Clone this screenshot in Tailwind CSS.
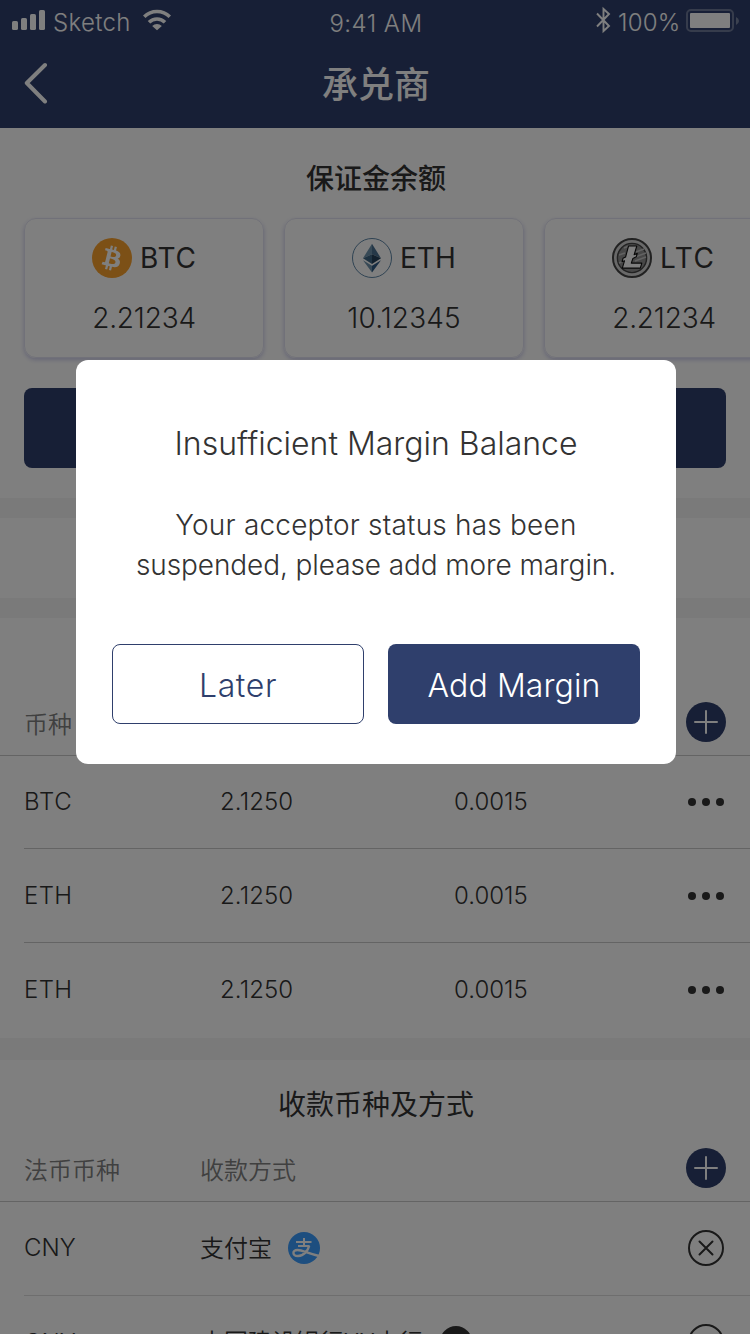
<!DOCTYPE html>
<html lang="zh-CN">
<head>
<meta charset="utf-8">
<title>承兑商</title>
<script src="https://cdn.jsdelivr.net/npm/@tailwindcss/browser@4"></script>
</head>
<body class="font-['Inter','Noto_Sans_CJK_SC',sans-serif] text-[#333]">
<div class="relative w-[750px] h-[1334px] overflow-hidden bg-white">
  <header class="h-32 bg-[#2f3f6c] text-white">
    <div class="h-10 grid grid-cols-3 pl-3 text-2xl leading-10">
      <div class="flex">
        <svg class="w-[33px] h-10 mr-2" viewBox="0 0 33 40" fill="#fff"><rect y="21" width="6" height="9" rx="1.6"/><rect x="9" y="18" width="6" height="12" rx="1.6"/><rect x="18" y="14" width="6" height="16" rx="1.6"/><rect x="27" y="10" width="6" height="20" rx="1.6"/></svg>
        <span class="pt-[3px] w-[78px] font-[350] tracking-[0.35px] whitespace-nowrap">Sketch</span>
        <svg class="w-[28px] h-10 ml-3" viewBox="0 0 28 40" fill="none" stroke="#fff" stroke-width="3.6"><path d="M1.200 16.800a18.200 18.200 0 0 1 25.600 0"/><path d="M6 22.300a11.400 11.400 0 0 1 16 0"/><path d="M9.200 25.900a6.800 6.800 0 0 1 9.600 0L14 30.300z" fill="#fff" stroke="none"/></svg>
      </div>
      <div class="pt-1 text-center font-[350] tracking-[0.45px]"><span class="pr-[10px]">9:41 AM</span></div>
      <div class="flex justify-end pr-[11px]">
        <svg class="w-[15px] h-10 mr-[7px]" viewBox="0 0 15 40" fill="none" stroke="#fff" stroke-width="1.900"><path d="M1 13.500 13 26l-5.500 5V9l5.500 5L1 26.500"/></svg>
        <span class="pt-[3px] w-[62px] font-[350] tracking-[0.2px] whitespace-nowrap">100%</span>
        <svg class="w-[53px] h-10 ml-[6px]" viewBox="0 0 53 40"><rect x="1" y="10" width="46" height="21" rx="4" fill="none" stroke="#fff" stroke-opacity=".3" stroke-width="2"/><rect x="4" y="13" width="40" height="15" rx="1" fill="#fff"/><path d="M50 17q3 1.500 3 4t-3 4z" fill="#fff" fill-opacity=".35"/></svg>
      </div>
    </div>
    <div class="h-[88px] grid grid-cols-[72px_1fr_72px] items-center">
      <svg class="w-[24px] h-[44px] ml-6" viewBox="0 0 24 44" fill="none" stroke="#fff" stroke-width="4" stroke-linecap="round" stroke-linejoin="round"><path d="M21 3 2.800 21 21 39.500"/></svg>
      <h1 class="pl-[2px] pt-[2px] text-center text-4xl leading-[86px] font-medium">承兑商</h1>
    </div>
  </header>

  <section class="h-[370px] pt-[31px]">
    <h2 class="text-center text-[28px] leading-10 h-[59px] font-medium pl-[2px]">保证金余额</h2>
    <div class="flex gap-5 pl-6">
      <div class="shrink-0 w-60 h-[140px] rounded-xl border border-[#e3e3f2] pt-[19px] shadow-[0_2px_4px_rgba(90,90,190,0.3)]">
        <div class="flex items-center justify-center gap-2 h-10 text-[28px]">
          <svg class="w-10 h-10" viewBox="0 0 32 32"><circle cx="16" cy="16" r="16" fill="#f9a12d"/><path transform="translate(-.5 0)" fill="#fff" d="M23.189 14.02c.314-2.096-1.283-3.223-3.465-3.975l.708-2.84-1.728-.43-.69 2.765c-.454-.114-.92-.22-1.385-.326l.695-2.783L15.596 6l-.708 2.839c-.376-.086-.746-.17-1.104-.26l.002-.009-2.384-.595-.46 1.846s1.283.294 1.256.312c.7.175.826.638.805 1.006l-.806 3.235c.048.012.11.03.18.057l-.183-.045-1.13 4.532c-.086.212-.303.531-.793.41.018.025-1.256-.313-1.256-.313l-.858 1.978 2.25.561c.418.105.828.215 1.231.318l-.715 2.872 1.727.43.708-2.84c.472.127.93.245 1.378.357l-.706 2.828 1.728.43.715-2.866c2.948.558 5.164.333 6.097-2.333.752-2.146-.037-3.385-1.588-4.192 1.13-.26 1.98-1.003 2.207-2.538zm-3.95 5.538c-.533 2.147-4.148.986-5.32.695l.95-3.805c1.172.293 4.929.872 4.37 3.11zm.535-5.569c-.487 1.953-3.495.96-4.47.717l.86-3.45c.975.243 4.118.696 3.61 2.733z"/></svg>
          <span class="w-14 font-normal tracking-[0.8px] whitespace-nowrap">BTC</span>
        </div>
        <div class="pt-5 text-center text-[28px] leading-10 font-[350] tracking-[-0.2px]">2.21234</div>
      </div>
      <div class="shrink-0 w-60 h-[140px] rounded-xl border border-[#e3e3f2] pt-[19px] shadow-[0_2px_4px_rgba(90,90,190,0.3)]">
        <div class="flex items-center justify-center gap-2 h-10 text-[28px]">
          <svg class="w-10 h-10" viewBox="0 0 40 40"><circle cx="20" cy="20" r="19.500" fill="none" stroke="#5e86a6"/><path fill="#6f93ac" d="M20 5.700 11 20.300l9-4z"/><path fill="#4b7191" d="M20 5.700v10.600l9 4z"/><path fill="#3f6685" d="m11 20.300 9-4v9.700z"/><path fill="#24415a" d="m29 20.300-9-4v9.700z"/><path fill="#6f93ac" d="m11 22.300 9 5.400v6.800z"/><path fill="#2f5a85" d="m29 22.300-9 5.400v6.800z"/></svg>
          <span class="w-14 font-normal whitespace-nowrap">ETH</span>
        </div>
        <div class="pt-5 text-center text-[28px] leading-10 font-[350] tracking-[0.1px]">10.12345</div>
      </div>
      <div class="shrink-0 w-60 h-[140px] rounded-xl border border-[#e3e3f2] pt-[19px] shadow-[0_2px_4px_rgba(90,90,190,0.3)]">
        <div class="flex items-center justify-center gap-2 h-10 text-[28px]">
          <svg class="w-10 h-10" viewBox="0 0 40 40"><circle cx="20" cy="20" r="19" fill="#d2d2d2" stroke="#444" stroke-width="2"/><circle cx="20" cy="20" r="14.600" fill="#8e8e8e" stroke="#444" stroke-width="1.400"/><path d="m24 14 8-3M23 19l11-4M23 23l11-4M7 17l6-2M7 25l5-2M12 10l5-2" stroke="#c4c4c4" stroke-width="1.600"/><path fill="#fff" stroke="#111" stroke-width="1.100" stroke-linejoin="round" d="M16.500 8h8.300l-2.700 8.800 3.200-1.600-1 3.600-3.400 1.700-1.600 4.600h10.500l-1.500 5H10.300l2.200-7.300-2.500 1 1-3.500 2.600-1.300z"/></svg>
          <span class="w-14 font-normal tracking-[1.500px] whitespace-nowrap">LTC</span>
        </div>
        <div class="pt-5 text-center text-[28px] leading-10 font-[350] tracking-[-0.2px]">2.21234</div>
      </div>
    </div>
    <div class="mx-6 mt-[30px] h-20 rounded-lg bg-[#2f3f6c]"></div>
  </section>
  <div class="h-5 bg-[#f5f5f5]"></div>
  <div class="h-20"></div>
  <div class="h-5 bg-[#f5f5f5]"></div>

  <section class="h-[420px] text-2xl font-[350]">
    <div class="h-[138px] border-b border-[#c8c8c8] px-6 pt-[84px] flex justify-between text-[#808080]">
      <span class="leading-[45px]">币种</span>
      <svg class="w-10 h-10" viewBox="0 0 40 40"><circle cx="20" cy="20" r="20" fill="#2f3f6c"/><path d="M9 20h22M20 9v22" stroke="#fff" stroke-width="2" stroke-linecap="round"/></svg>
    </div>
    <div class="ml-6 h-[93px] border-b border-[#c8c8c8] pr-6 grid grid-cols-[196px_234px_1fr] items-center">
      <span class="tracking-[0.7px]">BTC</span><span class="tracking-[0.1px]">2.1250</span>
      <div class="flex justify-between"><span>0.0015</span><svg class="w-10 h-8" viewBox="0 0 40 32" fill="#333"><circle cx="6" cy="16" r="4"/><circle cx="20" cy="16" r="4"/><circle cx="34" cy="16" r="4"/></svg></div>
    </div>
    <div class="ml-6 h-[94px] border-b border-[#c8c8c8] pr-6 grid grid-cols-[196px_234px_1fr] items-center">
      <span class="tracking-[0.4px]">ETH</span><span class="tracking-[0.1px]">2.1250</span>
      <div class="flex justify-between"><span>0.0015</span><svg class="w-10 h-8" viewBox="0 0 40 32" fill="#333"><circle cx="6" cy="16" r="4"/><circle cx="20" cy="16" r="4"/><circle cx="34" cy="16" r="4"/></svg></div>
    </div>
    <div class="ml-6 h-[94px] pr-6 grid grid-cols-[196px_234px_1fr] items-center">
      <span class="tracking-[0.4px]">ETH</span><span class="tracking-[0.1px]">2.1250</span>
      <div class="flex justify-between"><span>0.0015</span><svg class="w-10 h-8" viewBox="0 0 40 32" fill="#333"><circle cx="6" cy="16" r="4"/><circle cx="20" cy="16" r="4"/><circle cx="34" cy="16" r="4"/></svg></div>
    </div>
  </section>
  <div class="h-[22px] bg-[#f5f5f5]"></div>

  <section class="text-2xl font-[350]">
    <h2 class="h-[88px] pl-[2px] leading-[91px] text-[28px] font-normal text-center">收款币种及方式</h2>
    <div class="h-[54px] border-b border-[#c8c8c8] px-6 grid grid-cols-[176px_1fr_40px] text-[#808080]">
      <span class="leading-[45px]">法币币种</span><span class="leading-[45px]">收款方式</span>
      <svg class="w-10 h-10" viewBox="0 0 40 40"><circle cx="20" cy="20" r="20" fill="#2f3f6c"/><path d="M9 20h22M20 9v22" stroke="#fff" stroke-width="2" stroke-linecap="round"/></svg>
    </div>
    <div class="ml-6 h-[94px] border-b border-[#dcdcdc] pr-[26px] pb-px grid grid-cols-[176px_1fr_36px] items-center">
      <span>CNY</span>
      <div class="flex items-center gap-4"><span class="pt-[2px]">支付宝</span><svg class="w-8 h-8" viewBox="0 0 32 32" fill="none"><circle cx="16" cy="16" r="16" fill="#3b9cff"/><path d="M8 10h15.500M10 14h11.500M16 6v8" stroke="#fff" stroke-width="2"/><path d="M21.200 13.800C20 18.500 16 24 10 24c-6 0-6-6-.5-6 4.500 0 11 3.500 21.500 6" stroke="#fff" stroke-width="2.400"/></svg></div>
      <svg class="w-9 h-9" viewBox="0 0 36 36" fill="none" stroke="#333" stroke-width="2" stroke-linecap="round"><circle cx="18" cy="18" r="17"/><path d="m11.500 11.500 13 13m0-13-13 13"/></svg>
    </div>
    <div class="ml-6 h-[92px] pr-[26px] grid grid-cols-[176px_1fr_36px] items-center">
      <span class="pt-px">CNY</span>
      <div class="flex items-center gap-[17px]"><span class="pt-[2px] tracking-[-0.1px]">中国建设银行XX支行</span><svg class="w-8 h-8" viewBox="0 0 32 32"><circle cx="16" cy="16" r="16" fill="#333"/></svg></div>
      <svg class="w-9 h-9" viewBox="0 0 36 36" fill="none" stroke="#333" stroke-width="2" stroke-linecap="round"><circle cx="18" cy="18" r="17"/><path d="m11.500 11.500 13 13m0-13-13 13"/></svg>
    </div>
  </section>

  <div class="absolute inset-0 bg-black/50 pt-[360px] pl-[76px] font-light">
    <div class="w-[600px] h-[404px] rounded-xl bg-white pt-[60px] px-9 text-center">
      <h3 class="text-[32px] leading-[47px] h-[45px]">Insufficient Margin Balance</h3>
      <p class="mt-10 text-[28px] leading-10 whitespace-nowrap"><span class="tracking-[0.2px]">Your acceptor status has been</span><br><span class="tracking-[-0.1px]">suspended, please add more margin.</span></p>
      <div class="mt-[59px] grid grid-cols-2 gap-6 text-[32px]">
        <button class="h-20 rounded-lg border border-[#2f3f6c] text-[#2f3f6c] pt-[3px] leading-[75px] tracking-[0.6px]">Later</button>
        <button class="h-20 rounded-lg bg-[#2f3f6c] text-white pt-[3px] leading-[77px] tracking-[0.1px]">Add Margin</button>
      </div>
    </div>
  </div>
</div>
</body>
</html>
